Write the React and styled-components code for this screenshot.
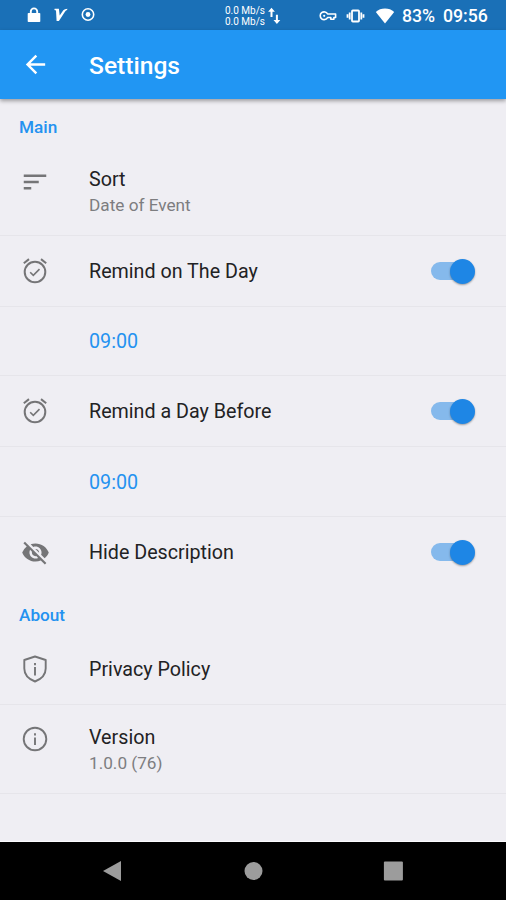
import React, { useState } from 'react';
import styled, { createGlobalStyle } from 'styled-components';
import { MdArrowBack, MdSort, MdVisibilityOff } from 'react-icons/md';

export default function App () {
	const [onTheDay, setOnTheDay] = useState(true);
	const [dayBefore, setDayBefore] = useState(true);
	const [hideDescription, setHideDescription] = useState(true);

	return (
		<>
			<GlobalStyle/>
			<Screen>
				<StatusBar>
					<Notifications>
						<LockIcon/>
						<VIcon/>
						<TargetIcon/>
					</Notifications>
					<Network>
						<Speed>
							<p>0.0 Mb/s</p>
							<p>0.0 Mb/s</p>
						</Speed>
						<ArrowsIcon/>
					</Network>
					<System>
						<KeyIcon/>
						<VibrateIcon/>
						<WifiIcon/>
						<Battery>83%</Battery>
						<Clock>09:56</Clock>
					</System>
				</StatusBar>
				<AppBar>
					<BackButton aria-label="Back">
						<MdArrowBack size={29}/>
					</BackButton>
					<h1>Settings</h1>
				</AppBar>
				<Content>
					<SectionTitle>Main</SectionTitle>
					<Row $height={90} $top={21}>
						<Icon><MdSort size={30}/></Icon>
						<Texts>
							<Label>Sort</Label>
							<Sub>Date of Event</Sub>
						</Texts>
					</Row>
					<Row $height={71}>
						<Icon><AlarmIcon/></Icon>
						<Label>Remind on The Day</Label>
						<Toggle on={onTheDay} onClick={() => setOnTheDay(!onTheDay)}/>
					</Row>
					<Row $height={69}>
						<Icon/>
						<Time>09:00</Time>
					</Row>
					<Row $height={71}>
						<Icon><AlarmIcon/></Icon>
						<Label>Remind a Day Before</Label>
						<Toggle on={dayBefore} onClick={() => setDayBefore(!dayBefore)}/>
					</Row>
					<Row $height={70}>
						<Icon/>
						<Time>09:00</Time>
					</Row>
					<Row $height={70} $last>
						<Icon><MdVisibilityOff size={29}/></Icon>
						<Label>Hide Description</Label>
						<Toggle on={hideDescription} onClick={() => setHideDescription(!hideDescription)}/>
					</Row>
					<SectionTitle>About</SectionTitle>
					<Row $height={71}>
						<Icon><ShieldIcon/></Icon>
						<Label>Privacy Policy</Label>
					</Row>
					<Row $height={89} $top={20}>
						<Icon><InfoIcon/></Icon>
						<Texts>
							<Label>Version</Label>
							<Sub>1.0.0 (76)</Sub>
						</Texts>
					</Row>
				</Content>
				<NavBar>
					<svg width="20" height="22" viewBox="0 0 20 22"><path d="M0 11 18 1v20z"/></svg>
					<svg width="20" height="22" viewBox="0 0 20 22"><circle cx="10.5" cy="11" r="9"/></svg>
					<svg width="20" height="22" viewBox="0 0 20 22"><rect x="0.9" y="1.5" width="19" height="19" rx="1"/></svg>
				</NavBar>
			</Screen>
		</>
	);
}

function Toggle ({ on, onClick }) {
	return (
		<Switch role="switch" aria-checked={on} $on={on} onClick={onClick}>
			<Thumb $on={on}/>
		</Switch>
	);
}

function LockIcon () {
	return (
		<svg width="14" height="16" viewBox="0 0 14 16" fill="none">
			<path d="M3.8 7V4.6a3.2 3.2 0 0 1 6.4 0V7" stroke="#fff" strokeWidth="1.9"/>
			<path d="M1.5 6h11q.8 0 .8.8v7.4q0 .8-.8.8h-11q-.8 0-.8-.8V6.8q0-.8.8-.8z" fill="#fff"/>
		</svg>
	);
}

function VIcon () {
	return (
		<svg width="14" height="14" viewBox="0 0 14 14" fill="#fff">
			<path d="M.6.8h4.3l.8 6.6L9.3 2.3Q10.6.9 13.4.8l-.3 1.2q-1.2.2-2 1.4L4.9 13H2.6L2 2.4.4 2z"/>
		</svg>
	);
}

function TargetIcon () {
	return (
		<svg width="14" height="14" viewBox="0 0 14 14" fill="none">
			<circle cx="7" cy="6.5" r="5.7" stroke="#fff" strokeWidth="1.6"/>
			<circle cx="7" cy="6.5" r="2.4" fill="#fff"/>
		</svg>
	);
}

function ArrowsIcon () {
	return (
		<svg width="13" height="18" viewBox="0 0 13 18" fill="#fff">
			<path d="M3.5.8 6.9 4.8H4.5V10h-2V4.8H.1z"/>
			<path d="M8.9 17 5.5 13h2.4V7.8h2V13h2.4z"/>
		</svg>
	);
}

function KeyIcon () {
	return (
		<svg width="18" height="12" viewBox="0 0 18 12" fill="none" stroke="#fff" strokeWidth="1.6">
			<path d="M8.6 4h8v3.5h-1.7v1.8h-3.1V7.5H8.6A3.9 3.9 0 1 1 8.6 4z" strokeLinejoin="round"/>
			<circle cx="5.2" cy="5.8" r="1.1" fill="#fff" stroke="none"/>
		</svg>
	);
}

function VibrateIcon () {
	return (
		<svg width="19" height="14" viewBox="0 0 19 14" fill="none" stroke="#fff" strokeWidth="1.8">
			<rect x="6" y="1.5" width="7" height="11" rx="0.8"/>
			<path d="M3.7 3.5v7M15.3 3.5v7M1.5 5.3v3.4M17.5 5.3v3.4"/>
		</svg>
	);
}

function WifiIcon () {
	return (
		<svg width="20" height="17" viewBox="0 0 20 17" fill="#fff">
			<path d="M10 15.500.8 4Q4.600.600 10 .6t9.200 3.400z"/>
		</svg>
	);
}

function AlarmIcon () {
	return (
		<svg width="26" height="26" viewBox="0 0 26 26" fill="none" stroke="#757577" strokeWidth="2">
			<circle cx="13" cy="14" r="10.3"/>
			<path d="M1.8 5.3 7 1.1M24.2 5.3 19 1.1"/>
			<path d="m8.2 14.3 3.1 3 6.2-6.2" strokeWidth="1.6"/>
		</svg>
	);
}

function ShieldIcon () {
	return (
		<svg width="26" height="28" viewBox="0 0 26 28" fill="none" stroke="#757577" strokeWidth="1.9">
			<path d="M13 1.5 23.7 5v8.5c0 6-4.5 10.6-10.7 13C6.8 24.1 2.3 19.5 2.3 13.5V5z" strokeLinejoin="round"/>
			<path d="M13 12v8.4M13 8v2.2"/>
		</svg>
	);
}

function InfoIcon () {
	return (
		<svg width="26" height="28" viewBox="0 0 26 28" fill="none" stroke="#757577" strokeWidth="1.9">
			<circle cx="13" cy="14" r="11.3"/>
			<path d="M13 12.6V20M13 8.2v2.2"/>
		</svg>
	);
}

const GlobalStyle = createGlobalStyle`
	* {
		box-sizing: border-box;
	}
	body, h1, h2, p {
		margin: 0;
	}
	body {
		font-family: Roboto, sans-serif;
		background-color: #efeef3;
	}
	button {
		border: 0;
		padding: 0;
		background: none;
		color: inherit;
	}
	svg {
		display: block;
		flex-shrink: 0;
	}
`;

const Screen = styled.div`
	display: flex;
	flex-direction: column;
	width: 506px;
	height: 900px;
	overflow: hidden;
	background-color: #efeef3;
`;

const StatusBar = styled.div`
	display: flex;
	align-items: center;
	height: 30px;
	flex-shrink: 0;
	color: white;
	background-color: #1a70b7;
`;

const Notifications = styled.div`
	display: flex;
	align-items: center;
	gap: 13px;
	width: 225px;
	padding-left: 27px;
`;

const Network = styled.div`
	display: flex;
	align-items: center;
	gap: 3px;
	width: 94px;
	padding-top: 1px;
`;

const Speed = styled.div`
	font-size: 10px;
	line-height: 11px;
	white-space: nowrap;
`;

const System = styled.div`
	display: flex;
	align-items: center;
	font-size: 17.7px;
	font-weight: 500;
	line-height: 20px;
	padding-top: 2px;
	svg {
		margin-right: 9px;
	}
	svg:nth-of-type(3) {
		margin-left: 1px;
		margin-right: 7px;
	}
`;

const Battery = styled.span`
	width: 41px;
`;

const Clock = styled.span`
	white-space: nowrap;
`;

const AppBar = styled.header`
	display: flex;
	align-items: center;
	height: 69px;
	flex-shrink: 0;
	padding-left: 21px;
	color: white;
	background-color: #2196f3;
	box-shadow: 0 2px 4px rgba(0,0,0,0.35);
	z-index: 1;
	h1 {
		font-size: 24.6px;
		font-weight: 500;
		line-height: 30px;
		padding-top: 2px;
	}
`;

const BackButton = styled.button`
	width: 68px;
`;

const Content = styled.main`
	flex: 1;
	border-bottom: 1px solid #fbfbfd;
`;

const SectionTitle = styled.h2`
	height: 47px;
	padding: 17px 0 0 19px;
	font-size: 17.2px;
	font-weight: 500;
	line-height: 22px;
	color: #2492f0;
`;

const Row = styled.div`
	display: flex;
	align-items: ${props => props.$top ? 'flex-start' : 'center'};
	height: ${props => props.$height}px;
	padding: ${props => props.$top || 0}px 33px 0 20px;
	border-bottom: ${props => props.$last ? '0' : '1px solid #e6e5ea'};
`;

const Icon = styled.div`
	display: flex;
	justify-content: center;
	width: 30px;
	margin-right: 39px;
	color: #757577;
`;

const Texts = styled.div`
	display: flex;
	flex-direction: column;
	p:first-child {
		padding-top: 0;
	}
`;

const Label = styled.p`
	padding-top: 2px;
	font-size: 19.7px;
	line-height: 26px;
	color: #222224;
`;

const Sub = styled.p`
	font-size: 17.2px;
	line-height: 24px;
	color: #7d7d80;
`;

const Time = styled.p`
	padding-top: 2px;
	font-size: 19.7px;
	line-height: 26px;
	color: #2492f0;
`;

const Switch = styled.button`
	display: flex;
	align-items: center;
	justify-content: ${props => props.$on ? 'flex-end' : 'flex-start'};
	width: 42px;
	height: 18px;
	margin-left: auto;
	border-radius: 9px;
	background-color: ${props => props.$on ? '#85b9ec' : '#b5b5b8'};
`;

const Thumb = styled.span`
	width: 25px;
	height: 25px;
	flex-shrink: 0;
	margin-right: -2px;
	border-radius: 50%;
	background-color: ${props => props.$on ? '#1e86e5' : '#fafafa'};
	box-shadow: 0 1px 2px rgba(0,0,0,0.35);
`;

const NavBar = styled.nav`
	display: flex;
	align-items: center;
	justify-content: space-between;
	height: 58px;
	flex-shrink: 0;
	padding: 0 103px;
	background-color: black;
	fill: #9c9c9c;
`;
